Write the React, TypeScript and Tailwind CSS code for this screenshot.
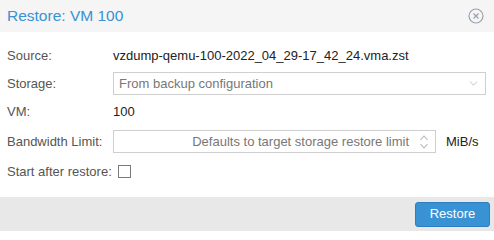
import { ChevronDown } from "lucide-react";

const font = { fontFamily: '"Liberation Sans", Arial, sans-serif' };

function Label({ children }: { children: React.ReactNode }) {
  return <div className="w-[106px] shrink-0 text-[13px] text-[#555]">{children}</div>;
}

export default function App() {
  return (
    <div className="w-[494px] h-[231px] flex flex-col bg-white" style={font}>
      {/* header */}
      <div className="h-[32px] bg-[#f5f5f5] flex items-center justify-between pl-[7px] pr-[10px]">
        <span className="text-[15.5px] text-[#3892d4]">Restore: VM 100</span>
        <svg width="16" height="16" viewBox="0 0 16 16" fill="none" stroke="#9aa3ad" strokeWidth="1.2">
          <circle cx="8" cy="8" r="7" />
          <path d="M5.5 5.5l5 5M10.5 5.5l-5 5" />
        </svg>
      </div>

      {/* body */}
      <div className="flex-1 px-[7px] pt-[12px]">
        <div className="h-[23px] flex items-center">
          <Label>Source:</Label>
          <span className="text-[13px] text-[#222]">vzdump-qemu-100-2022_04_29-17_42_24.vma.zst</span>
        </div>
        <div className="h-[23px] mt-[5px] flex items-center">
          <Label>Storage:</Label>
          <div className="w-[373px] h-[23px] border border-[#cfcfcf] flex items-center justify-between px-[5px]">
            <span className="text-[13px] text-[#777]">From backup configuration</span>
            <ChevronDown size={13} strokeWidth={1.3} className="text-[#aaa]" />
          </div>
        </div>
        <div className="h-[23px] mt-[5px] flex items-center">
          <Label>VM:</Label>
          <span className="text-[13px] text-[#222]">100</span>
        </div>
        <div className="h-[23px] mt-[7px] flex items-center">
          <Label>Bandwidth Limit:</Label>
          <div className="w-[323px] h-[23px] border border-[#cfcfcf] flex items-center justify-end pr-[6px]">
            <span className="text-[13px] text-[#777] mr-[10px]">Defaults to target storage restore limit</span>
            <svg width="10" height="16" viewBox="0 0 10 16" fill="none" stroke="#b5b5b5" strokeWidth="1.1">
              <path d="M1.5 6l3.5-4 3.5 4M1.5 10l3.5 4 3.5-4" />
            </svg>
          </div>
          <span className="ml-[10px] text-[13px] text-[#222]">MiB/s</span>
        </div>
        <div className="h-[23px] mt-[7px] flex items-center">
          <div className="text-[13px] text-[#555]">Start after restore:</div>
          <div className="ml-[6px] w-[13px] h-[13px] border border-[#7a7a7a] bg-white" />
        </div>
      </div>

      {/* footer */}
      <div className="h-[34px] bg-[#e8e8e8] flex items-center justify-end pr-[4px]">
        <button className="w-[75px] h-[25px] rounded-[3px] bg-[#3892d4] border border-[#2f7fc0] text-white text-[13px]">
          Restore
        </button>
      </div>
    </div>
  );
}
